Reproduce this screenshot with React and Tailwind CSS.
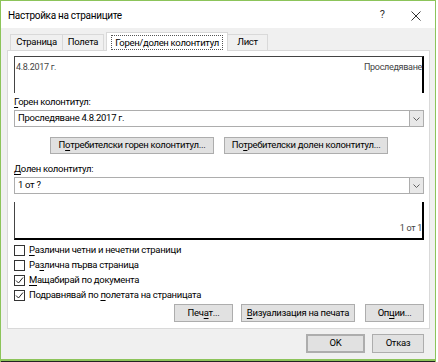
import React from 'react';

const font = { fontFamily: 'Roboto, "Noto Sans", sans-serif' };

const U = ({ children }) => <span className="underline underline-offset-[1.5px]">{children}</span>;

const Btn = ({ children, className = '' }) => (
  <div
    className={`flex items-center justify-center bg-[#e1e1e1] border border-[#adadad] text-[9.5px] tracking-[-0.3px] text-black whitespace-nowrap ${className}`}
  >
    <span>{children}</span>
  </div>
);

const Combo = ({ value }) => (
  <div className="h-[17px] flex items-stretch bg-white border border-[#adadad]">
    <div className="flex-1 flex items-center pl-[3px] text-[9.5px] tracking-[-0.3px] text-black">{value}</div>
    <div className="w-[14px] flex items-center justify-center bg-[#e8e8e8] border-l border-[#adadad]">
      <svg width="7" height="4" viewBox="0 0 7 4">
        <path d="M0.5 0.5 L3.5 3.5 L6.5 0.5" fill="none" stroke="#606060" strokeWidth="1" />
      </svg>
    </div>
  </div>
);

const Check = ({ checked, children }) => (
  <div className="h-[15px] flex items-center gap-[4px] text-[9.5px] tracking-[-0.3px] text-black">
    <div className="w-[11px] h-[11px] border border-[#333] bg-white flex items-center justify-center">
      {checked && (
        <svg width="9" height="9" viewBox="0 0 9 9">
          <path d="M1 4.5 L3.5 7 L8 1.5" fill="none" stroke="#222" strokeWidth="1" />
        </svg>
      )}
    </div>
    <span>{children}</span>
  </div>
);

export default function App() {
  return (
    <div style={font} className="w-[436px] h-[362px] flex flex-col bg-[#f0f0f0] border border-[#8cc45a] border-b-0 overflow-hidden">
      {/* title bar */}
      <div className="h-[27px] shrink-0 bg-white flex items-center pl-[7px] pr-[12px] pt-[2px]">
        <span className="flex-1 text-[10px] tracking-[-0.3px] text-black">Настройка на страниците</span>
        <span className="text-[11px] text-[#333] mr-[26px]">?</span>
        <svg width="10" height="10" viewBox="0 0 10 10" className="mr-[2px]">
          <path d="M0.5 0.5 L9.5 9.5 M9.5 0.5 L0.5 9.5" stroke="#333" strokeWidth="1" />
        </svg>
      </div>

      {/* tabs */}
      <div className="h-[22px] shrink-0 flex items-end pl-[9px] text-[9.5px] tracking-[-0.3px] text-black">
        <div className="h-[16px] w-[53px] flex items-center justify-center bg-[#f0f0f0] border border-b-0 border-[#d9d9d9]">Страница</div>
        <div className="h-[16px] w-[42px] ml-[-1px] flex items-center justify-center bg-[#f0f0f0] border border-b-0 border-[#d9d9d9]">Полета</div>
        <div className="h-[19px] w-[122px] ml-[2px] flex items-center justify-center bg-white border border-b-0 border-[#d9d9d9] relative z-10 mb-[-1px]">
          <span className="border border-dotted border-[#555] px-[3px] leading-[13px]">Горен/долен колонтитул</span>
        </div>
        <div className="h-[16px] w-[41px] ml-[-1px] flex items-center justify-center bg-[#f0f0f0] border border-b-0 border-[#d9d9d9]">Лист</div>
      </div>

      {/* panel */}
      <div className="ml-[6px] mr-[5px] h-[279px] shrink-0 bg-white border border-[#d9d9d9] pl-[6px] pr-[5px] pt-[5px] flex flex-col">
        <div className="h-[37px] shrink-0 border-t border-l border-[#444] border-r-2 border-r-black flex justify-between pl-[1px] pt-[4px] text-[9px] tracking-[-0.3px] text-[#444]">
          <span>4.8.2017 г.</span>
          <span>Проследяване</span>
        </div>

        <div className="h-[17px] shrink-0 pt-[2px] text-[9.5px] tracking-[-0.3px] text-black flex items-center">
          <span><U>Г</U>орен колонтитул:</span>
        </div>
        <Combo value="Проследяване 4.8.2017 г." />

        <div className="mt-[10px] flex gap-[10px] pl-[36px]">
          <Btn className="w-[164px] h-[17px]">П<U>о</U>требителски горен колонтитул...</Btn>
          <Btn className="w-[164px] h-[17px]">По<U>т</U>ребителски долен колонтитул...</Btn>
        </div>

        <div className="mt-[8px] h-[15px] shrink-0 text-[9.5px] tracking-[-0.3px] text-black flex items-center">
          <span><U>Д</U>олен колонтитул:</span>
        </div>
        <Combo value="1 от ?" />

        <div className="mt-[8px] h-[38px] shrink-0 border-l border-[#444] border-r-2 border-r-black border-b-2 border-b-black flex items-end justify-end pb-[3px] text-[9px] tracking-[-0.3px] text-[#444]">
          <span>1 от 1</span>
        </div>

        <div className="mt-[3px] flex flex-col">
          <Check><U>Р</U>азлични четни и нечетни страници</Check>
          <Check>Ра<U>з</U>лична първа страница</Check>
          <Check checked><U>М</U>ащабирай по документа</Check>
          <Check checked>Подравнявай по <U>п</U>олетата на страницата</Check>
        </div>

        <div className="mt-[1px] flex justify-end">
          <Btn className="w-[59px] h-[18px]">Печ<U>а</U>т...</Btn>
          <Btn className="w-[114px] h-[18px] ml-[8px]"><U>В</U>изуализация на печата</Btn>
          <Btn className="w-[59px] h-[18px] ml-[10px]">Оп<U>ц</U>ии...</Btn>
        </div>
      </div>

      {/* footer buttons */}
      <div className="flex-1 flex items-start justify-end pt-[5px] pr-[11px]">
        <Btn className="w-[59px] h-[19px] border-[#0078d7] border-2">OK</Btn>
        <Btn className="w-[52px] h-[19px] ml-[7px]">Отказ</Btn>
      </div>
      <div className="h-[2px] shrink-0 bg-[#8cc45a]"></div>
      <div className="h-[1px] shrink-0 bg-[#222]"></div>
    </div>
  );
}
